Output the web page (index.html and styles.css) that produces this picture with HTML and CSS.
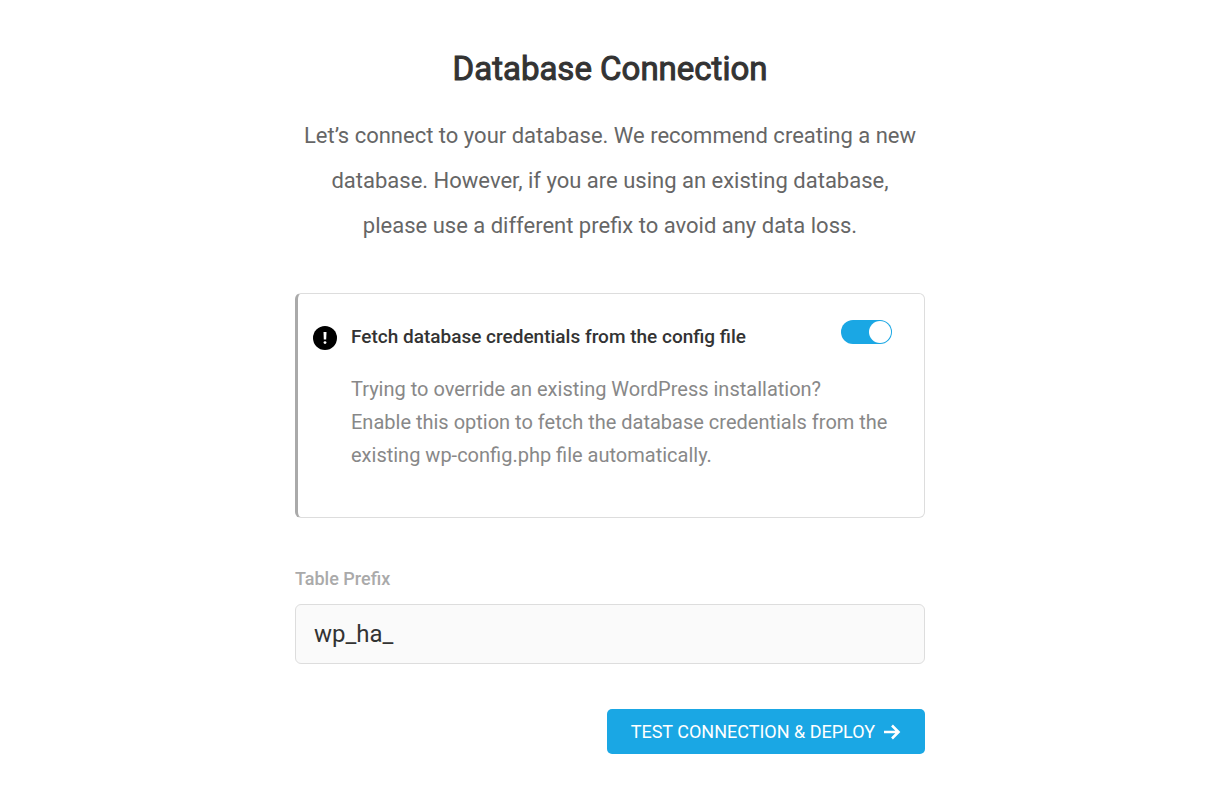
FILE: index.html
```html
<!DOCTYPE html>
<html lang="en">
<head>
    <meta charset="UTF-8">
    <meta name="viewport" content="width=device-width, initial-scale=1.0">
    <title>Database Connection</title>
    <link rel="stylesheet" href="styles.css">
</head>
<body>
    <main class="container">
        <h1 class="title">Database Connection</h1>
        <p class="intro">Let’s connect to your database. We recommend creating a new database. However, if you are using an existing database, please use a different prefix to avoid any data loss.</p>

        <form>
            <div class="notice">
                <svg class="notice-icon" viewBox="0 0 24 24" aria-hidden="true">
                    <circle cx="12" cy="12" r="12" fill="#000"/>
                    <path d="M10.500 6h3l-.3 7.500h-2.400z" fill="#fff"/>
                    <circle cx="12" cy="16.600" r="1.400" fill="#fff"/>
                </svg>
                <div class="notice-body">
                    <div class="notice-head">
                        <label class="notice-title" for="fetch">Fetch database credentials from the config file</label>
                        <input class="switch" type="checkbox" id="fetch" checked>
                    </div>
                    <p class="notice-text">Trying to override an existing WordPress installation?<br>Enable this option to fetch the database credentials from the existing wp-config.php file automatically.</p>
                </div>
            </div>

            <label class="field-label" for="prefix">Table Prefix</label>
            <input class="field" type="text" id="prefix" value="wp_ha_">

            <div class="actions">
                <button class="btn" type="submit">
                    Test Connection &amp; Deploy
                    <svg class="btn-icon" viewBox="0 0 18 18" aria-hidden="true">
                        <path d="M1 9h14M9 2.500L15.500 9 9 15.500" fill="none" stroke="#fff" stroke-width="2.600"/>
                    </svg>
                </button>
            </div>
        </form>
    </main>
</body>
</html>
```

FILE: styles.css
```css
* {
    box-sizing: border-box;
}
body {
    margin: 0;
    padding: 48px 20px;
    background: #fff;
    color: #333;
    font-family: Roboto, sans-serif;
}
.container {
    max-width: 630px;
    margin: 0 auto;
}
.title {
    margin: 0 0 23px;
    font-size: 33px;
    line-height: 42px;
    font-weight: 400;
    -webkit-text-stroke: 1px currentColor;
    text-align: center;
}
.intro {
    margin: 0 0 45px;
    padding: 0 4px;
    color: #666;
    font-size: 22px;
    line-height: 45px;
    text-align: center;
}
.notice {
    display: flex;
    gap: 14px;
    padding: 26px 32px 45px 15px;
    border: 1px solid #ddd;
    border-left: 3px solid #aaa;
    border-radius: 6px;
}
.notice-icon {
    flex: none;
    width: 24px;
    height: 24px;
    margin-top: 6px;
}
.notice-body {
    flex: 1;
}
.notice-head {
    display: flex;
    justify-content: space-between;
    align-items: flex-start;
    margin-bottom: 20px;
}
.notice-title {
    font-size: 19px;
    line-height: 33px;
    font-weight: 500;
}
.switch {
    appearance: none;
    flex: none;
    width: 51px;
    height: 24px;
    margin: 0;
    padding: 1px;
    border-radius: 12px;
    background: #aaa;
    cursor: pointer;
}
.switch::before {
    content: "";
    display: block;
    width: 22px;
    height: 22px;
    border-radius: 50%;
    background: #fff;
}
.switch:checked {
    background: #1aa7e4;
}
.switch:checked::before {
    margin-left: auto;
}
.notice-text {
    margin: 0;
    color: #888;
    font-size: 20px;
    line-height: 33px;
}
.field-label {
    display: block;
    margin: 50px 0 14px;
    color: #aaa;
    font-size: 18px;
    line-height: 22px;
    font-weight: 500;
}
.field {
    display: block;
    width: 100%;
    height: 60px;
    padding: 0 18px;
    border: 1px solid #ddd;
    border-radius: 6px;
    background: #fafafa;
    color: #333;
    font-family: inherit;
    font-size: 24px;
}
.actions {
    display: flex;
    justify-content: flex-end;
    margin-top: 45px;
}
.btn {
    display: flex;
    align-items: center;
    gap: 8px;
    height: 45px;
    padding: 0 24px;
    border: none;
    border-radius: 5px;
    background: #1aa7e4;
    color: #fff;
    font-family: inherit;
    font-size: 18px;
    text-transform: uppercase;
    cursor: pointer;
}
.btn-icon {
    width: 18px;
    height: 18px;
}
```
